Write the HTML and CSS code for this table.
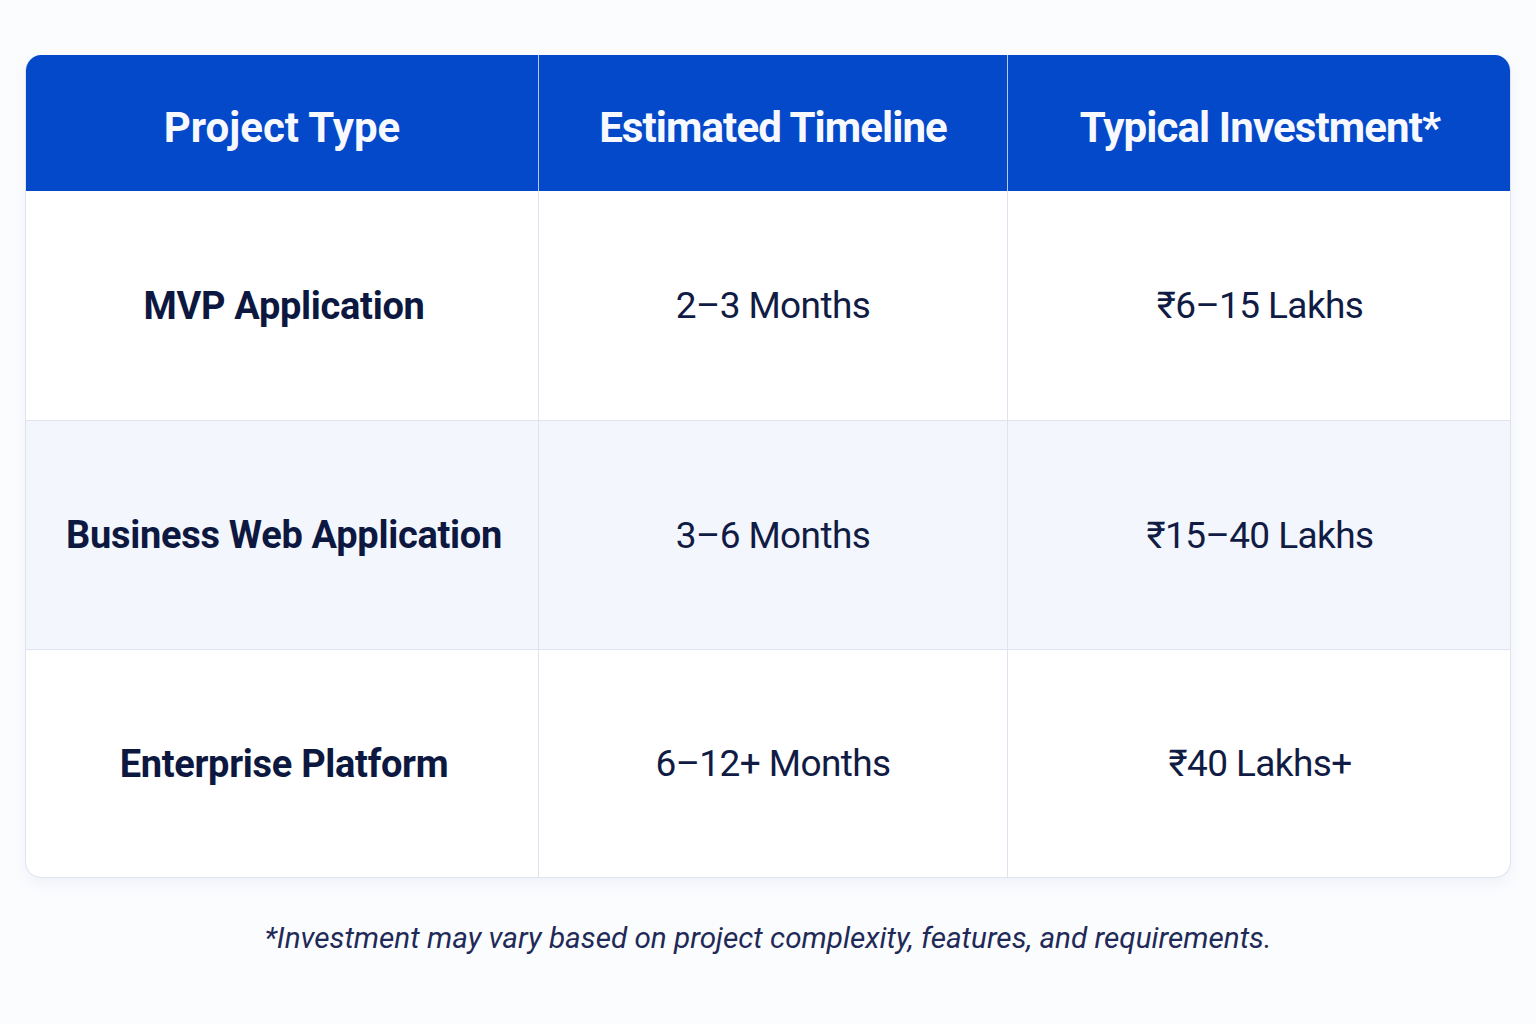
FILE: index.html
```html
<!DOCTYPE html>
<html lang="en">
<head>
<meta charset="utf-8">
<title>Project Pricing</title>
<link rel="stylesheet" href="styles.css">
</head>
<body>
<main class="page">
  <div class="table">
    <div class="cell head">Project Type</div>
    <div class="cell head">Estimated Timeline</div>
    <div class="cell head">Typical Investment*</div>

    <div class="cell name">MVP Application</div>
    <div class="cell val">2–3 Months</div>
    <div class="cell val">₹6–15 Lakhs</div>

    <div class="cell name alt">Business Web Application</div>
    <div class="cell val alt">3–6 Months</div>
    <div class="cell val alt">₹15–40 Lakhs</div>

    <div class="cell name last">Enterprise Platform</div>
    <div class="cell val last">6–12+ Months</div>
    <div class="cell val last">₹40 Lakhs+</div>
  </div>
  <p class="note">*Investment may vary based on project complexity, features, and requirements.</p>
</main>
</body>
</html>
```

FILE: styles.css
```css
html, body {
  margin: 0;
  padding: 0;
  background: #fbfcfe;
}

body {
  font-family: Roboto, "Noto Sans", "Liberation Sans", sans-serif;
  color: #0e1a40;
}

.page {
  padding: 55px 25px 0 25px;
  width: 1486px;
}

.table {
  display: grid;
  grid-template-columns: 513px 469px 504px;
  grid-template-rows: 136px 230px 229px 227px;
  border: 1px solid #dfe4f2;
  border-top: none;
  border-radius: 16px;
  overflow: hidden;
  background: #ffffff;
  box-shadow: 0 6px 14px rgba(70, 90, 160, 0.06);
}

.cell {
  display: flex;
  align-items: center;
  justify-content: center;
  border-right: 1px solid #dfe3ef;
  border-bottom: 1px solid #dfe3ef;
  text-align: center;
}

.cell:nth-child(3n) {
  border-right: none;
}

.head {
  background: #0349c9;
  color: #f7f9ff;
  font-weight: 700;
  font-size: 42px;
  letter-spacing: -0.9px;
  border-right-color: #b9c8ee;
  border-bottom: none;
  padding-top: 8px;
}

.head:first-child {
  letter-spacing: 0;
}

.name {
  font-weight: 700;
  font-size: 38px;
  letter-spacing: -0.3px;
  color: #0d1840;
  padding-left: 4px;
}

.val {
  font-weight: 400;
  font-size: 37px;
  letter-spacing: -0.6px;
  color: #111c44;
}

.alt {
  background: #f3f6fd;
}

.last {
  border-bottom: none;
}

.note {
  margin: 42px 0 0 0;
  text-align: center;
  font-style: italic;
  font-size: 29.7px;
  color: #1f2a58;
  letter-spacing: 0;
}
```
